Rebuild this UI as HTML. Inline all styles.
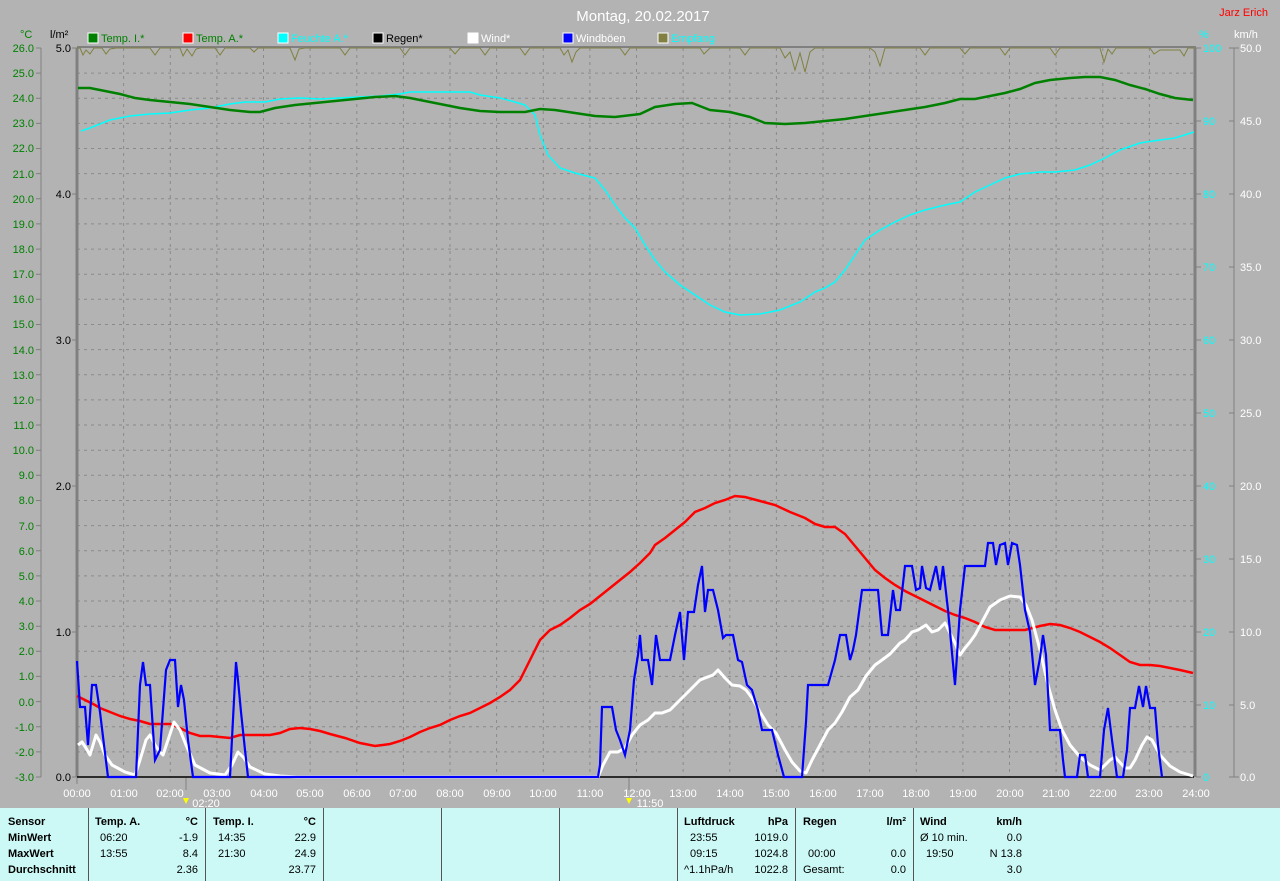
<!DOCTYPE html>
<html><head><meta charset="utf-8"><style>
html,body{margin:0;padding:0;background:#b3b3b3;}
svg{display:block;font-family:"Liberation Sans",sans-serif;}
.tb{position:absolute;left:0;top:808px;width:1280px;height:73px;background:#ccf9f6;font-family:"Liberation Sans",sans-serif;font-size:11px;color:#000;}
.col{position:absolute;top:0;height:73px;border-left:1px solid #555;}
.r{position:absolute;white-space:nowrap}
.b{font-weight:bold}
</style></head><body>
<div style="position:relative;width:1280px;height:881px;overflow:hidden">
<svg width="1280" height="808" viewBox="0 0 1280 808">
<rect width="1280" height="808" fill="#b3b3b3"/>
<text x="643" y="21" fill="#fff" font-size="15" text-anchor="middle">Montag, 20.02.2017</text>
<text x="1268" y="16" fill="#f00" font-size="11" text-anchor="end">Jarz Erich</text>
<g font-size="11">
<rect x="88" y="33" width="10" height="10" fill="#008000" stroke="#fff"/><text x="101" y="42" fill="#008000">Temp. I.*</text>
<rect x="183" y="33" width="10" height="10" fill="#f00" stroke="#fff"/><text x="196" y="42" fill="#008000">Temp. A.*</text>
<rect x="278" y="33" width="10" height="10" fill="#0ff" stroke="#fff"/><text x="291" y="42" fill="#0ff">Feuchte A.*</text>
<rect x="373" y="33" width="10" height="10" fill="#000" stroke="#fff"/><text x="386" y="42" fill="#000">Regen*</text>
<rect x="468" y="33" width="10" height="10" fill="#fff" stroke="#fff"/><text x="481" y="42" fill="#fff">Wind*</text>
<rect x="563" y="33" width="10" height="10" fill="#00f" stroke="#fff"/><text x="576" y="42" fill="#fff">Windböen</text>
<rect x="658" y="33" width="10" height="10" fill="#808040" stroke="#fff"/><text x="671" y="42" fill="#0ff">Empfang</text>
<text x="20" y="38" fill="#008000">°C</text>
<text x="50" y="38" fill="#000">l/m²</text>
<text x="1199" y="38" fill="#0ff">%</text>
<text x="1234" y="38" fill="#fff">km/h</text>
</g>
<!-- grid -->
<g stroke="#8a8a8a" stroke-dasharray="3,4" stroke-width="1">
<path d="M77 73.1H1194M77 98.2H1194M77 123.4H1194M77 148.5H1194M77 173.6H1194M77 198.8H1194M77 223.9H1194M77 249.1H1194M77 274.2H1194M77 299.3H1194M77 324.5H1194M77 349.6H1194M77 374.8H1194M77 399.9H1194M77 425H1194M77 450.2H1194M77 475.3H1194M77 500.5H1194M77 525.6H1194M77 550.7H1194M77 575.9H1194M77 601H1194M77 626.2H1194M77 651.3H1194M77 676.4H1194M77 701.6H1194M77 726.7H1194M77 751.9H1194"/>
<path d="M123.6 48V777M170.3 48V777M216.9 48V777M263.5 48V777M310.1 48V777M356.8 48V777M403.4 48V777M450 48V777M496.6 48V777M543.3 48V777M589.9 48V777M636.5 48V777M683.1 48V777M729.8 48V777M776.4 48V777M823 48V777M869.6 48V777M916.3 48V777M962.9 48V777M1009.5 48V777M1056.1 48V777M1102.8 48V777M1149.4 48V777"/>
</g>
<!-- axes -->
<g stroke="#808080" fill="none">
<path d="M41 48V777" stroke-width="1"/>
<path d="M36 48H41M36 73.1H41M36 98.2H41M36 123.4H41M36 148.5H41M36 173.6H41M36 198.8H41M36 223.9H41M36 249.1H41M36 274.2H41M36 299.3H41M36 324.5H41M36 349.6H41M36 374.8H41M36 399.9H41M36 425H41M36 450.2H41M36 475.3H41M36 500.5H41M36 525.6H41M36 550.7H41M36 575.9H41M36 601H41M36 626.2H41M36 651.3H41M36 676.4H41M36 701.6H41M36 726.7H41M36 751.9H41M36 777H41"/>
<path d="M77 48V777" stroke-width="3"/>
<path d="M72 48H77M72 194H77M72 340H77M72 486H77M72 632H77M72 777H77"/>
<path d="M77 47H1196" stroke-width="2"/>
<path d="M1195 48V777" stroke-width="3"/>
<path d="M1196 48H1201M1196 121H1201M1196 194H1201M1196 267H1201M1196 340H1201M1196 413H1201M1196 486H1201M1196 559H1201M1196 632H1201M1196 705H1201M1196 777H1201"/>
<path d="M1234 48V777"/>
<path d="M1229 48H1239M1229 121H1234M1229 194H1234M1229 267H1234M1229 340H1234M1229 413H1234M1229 486H1234M1229 559H1234M1229 632H1234M1229 705H1234M1229 777H1239"/>
<path d="M77 778V784M186 778V790M629 778V790"/>
</g>
<path d="M77 777H1194" stroke="#000" stroke-width="1.5"/>
<g font-size="11" fill="#008000" text-anchor="end">
<text x="34" y="52">26.0</text><text x="34" y="77">25.0</text><text x="34" y="102">24.0</text><text x="34" y="127">23.0</text><text x="34" y="152">22.0</text><text x="34" y="178">21.0</text><text x="34" y="203">20.0</text><text x="34" y="228">19.0</text><text x="34" y="253">18.0</text><text x="34" y="278">17.0</text><text x="34" y="303">16.0</text><text x="34" y="328">15.0</text><text x="34" y="354">14.0</text><text x="34" y="379">13.0</text><text x="34" y="404">12.0</text><text x="34" y="429">11.0</text><text x="34" y="454">10.0</text><text x="34" y="479">9.0</text><text x="34" y="504">8.0</text><text x="34" y="530">7.0</text><text x="34" y="555">6.0</text><text x="34" y="580">5.0</text><text x="34" y="605">4.0</text><text x="34" y="630">3.0</text><text x="34" y="655">2.0</text><text x="34" y="680">1.0</text><text x="34" y="706">0.0</text><text x="34" y="731">-1.0</text><text x="34" y="756">-2.0</text><text x="34" y="781">-3.0</text>
</g>
<g font-size="11" fill="#000" text-anchor="end">
<text x="71" y="52">5.0</text><text x="71" y="198">4.0</text><text x="71" y="344">3.0</text><text x="71" y="490">2.0</text><text x="71" y="636">1.0</text><text x="71" y="781">0.0</text>
</g>
<g font-size="11" fill="#0ff">
<text x="1203" y="52">100</text><text x="1203" y="125">90</text><text x="1203" y="198">80</text><text x="1203" y="271">70</text><text x="1203" y="344">60</text><text x="1203" y="417">50</text><text x="1203" y="490">40</text><text x="1203" y="563">30</text><text x="1203" y="636">20</text><text x="1203" y="709">10</text><text x="1203" y="781">0</text>
</g>
<g font-size="11" fill="#fff">
<text x="1240" y="52">50.0</text><text x="1240" y="125">45.0</text><text x="1240" y="198">40.0</text><text x="1240" y="271">35.0</text><text x="1240" y="344">30.0</text><text x="1240" y="417">25.0</text><text x="1240" y="490">20.0</text><text x="1240" y="563">15.0</text><text x="1240" y="636">10.0</text><text x="1240" y="709">5.0</text><text x="1240" y="781">0.0</text>
</g>
<g font-size="11" fill="#fff" text-anchor="middle">
<text x="77" y="797">00:00</text><text x="124" y="797">01:00</text><text x="170" y="797">02:00</text><text x="217" y="797">03:00</text><text x="264" y="797">04:00</text><text x="310" y="797">05:00</text><text x="357" y="797">06:00</text><text x="403" y="797">07:00</text><text x="450" y="797">08:00</text><text x="497" y="797">09:00</text><text x="543" y="797">10:00</text><text x="590" y="797">11:00</text><text x="637" y="797">12:00</text><text x="683" y="797">13:00</text><text x="730" y="797">14:00</text><text x="776" y="797">15:00</text><text x="823" y="797">16:00</text><text x="870" y="797">17:00</text><text x="916" y="797">18:00</text><text x="963" y="797">19:00</text><text x="1010" y="797">20:00</text><text x="1056" y="797">21:00</text><text x="1103" y="797">22:00</text><text x="1149" y="797">23:00</text><text x="1196" y="797">24:00</text>
<text x="206" y="807">02:20</text><text x="650" y="807">11:50</text>
</g>
<path d="M183 798l3 6 3-6z" fill="#ff0"/><path d="M626 798l3 6 3-6z" fill="#ff0"/>
<!-- olive -->
<polyline fill="none" stroke="#808040" stroke-width="1" points="77,48 80,48 83,55 86,50 90,54 94,48 102,48 106,54 110,49 116,48 150,48 155,55 160,48 180,48 183,56 187,49 192,56 196,49 200,48 215,48 220,55 225,48 250,48 254,52 258,48 290,48 295,60 299,49 305,48 340,48 345,55 350,48 400,48 405,55 410,48 450,48 455,54 460,48 480,48 485,55 490,48 520,48 525,55 530,48 560,48 564,55 568,50 572,62 576,52 580,48 620,48 625,55 630,48 700,48 704,54 710,48 740,48 745,55 750,48 780,48 785,58 790,52 795,70 800,53 805,72 810,52 815,48 870,48 875,52 880,66 885,48 920,48 925,55 930,48 960,48 965,54 970,48 1000,48 1005,55 1010,48 1050,48 1055,55 1060,48 1100,48 1104,62 1108,49 1112,54 1116,48 1150,48 1154,54 1160,50 1180,50 1184,56 1188,48 1194,48"/>
<!-- cyan -->
<polyline fill="none" stroke="#0ff" stroke-width="1.5" points="81,131 90,128 110,120 130,116 150,114 170,113 190,110 210,108 230,104 245,102 265,102 280,99 300,98 320,99 340,98 360,97 380,96 400,94 410,92 430,92 470,92 480,95 500,98 515,102 525,105 535,115 540,135 548,155 560,168 575,173 595,178 605,190 615,205 625,218 635,228 645,245 655,260 665,272 680,285 695,295 710,305 725,312 740,315 760,314 780,310 800,302 815,292 825,288 835,282 845,270 855,255 865,240 880,230 895,222 910,215 925,210 945,205 960,202 975,192 990,185 1005,178 1020,174 1040,172 1055,172 1075,170 1090,165 1105,158 1120,150 1140,143 1160,140 1175,138 1194,132"/>
<!-- green -->
<polyline fill="none" stroke="#008000" stroke-width="2.5" points="78,88 90,88 105,91 120,94 135,98 150,100 170,102 190,104 210,107 230,110 250,112 260,112 275,108 295,105 315,103 335,101 355,99 375,97 395,96 410,98 425,101 440,104 460,108 480,111 500,112 525,112 540,109 555,110 575,113 595,116 615,117 640,114 655,107 675,104 692,103 710,110 730,112 750,117 765,123 785,124 805,123 825,121 845,119 865,116 885,113 905,110 925,107 945,103 960,99 975,99 990,96 1005,93 1020,89 1035,83 1050,80 1070,78 1085,77 1100,77 1115,80 1130,85 1145,89 1160,94 1175,98 1193,100"/>
<!-- red -->
<polyline fill="none" stroke="#f00" stroke-width="2.5" points="77,696 85,700 95,705 100,708 110,712 120,716 130,719 140,721 150,724 160,724 170,724 180,728 190,733 200,736 210,736 220,737 230,738 240,735 250,735 260,735 270,735 280,733 290,729 300,728 310,729 320,731 330,734 345,738 360,743 375,746 390,744 400,741 410,737 420,732 430,728 440,725 450,720 460,716 470,713 480,708 490,703 500,697 510,690 520,680 525,670 530,660 535,650 540,640 550,630 560,625 570,618 580,610 590,604 600,596 610,588 620,580 630,572 640,563 650,553 655,545 665,538 675,530 685,522 695,512 705,508 715,503 725,500 735,496 745,497 760,501 775,505 790,512 805,518 815,524 825,527 835,527 845,534 855,546 865,558 875,570 885,578 895,585 905,591 915,596 925,601 935,606 945,611 955,615 965,618 975,622 985,627 995,630 1010,630 1025,630 1040,626 1050,624 1060,625 1070,628 1080,632 1090,637 1100,642 1110,648 1120,655 1130,662 1140,665 1150,665 1160,666 1170,668 1180,670 1193,673"/>
<!-- white -->
<polyline fill="none" stroke="#fff" stroke-width="3" stroke-linejoin="round" points="78,745 82,742 86,748 90,755 96,735 100,742 105,755 112,765 125,772 135,775 140,760 146,740 150,735 155,745 160,752 163,755 168,740 174,722 180,730 186,745 195,765 210,773 225,775 232,765 238,752 244,758 250,767 265,774 280,776 297,777 598,777 603,765 610,752 618,752 625,748 632,735 640,725 648,720 655,713 662,713 670,710 680,700 690,690 700,680 705,678 713,675 718,670 725,678 732,685 740,686 746,690 752,698 760,712 768,725 776,733 785,750 792,762 800,771 806,773 812,760 820,745 828,730 835,723 842,712 850,697 858,690 866,676 875,665 882,660 890,654 900,643 905,640 912,632 918,630 926,625 932,632 938,630 945,623 950,633 955,643 960,655 965,648 970,642 975,635 982,622 990,607 1000,600 1010,596 1020,597 1026,605 1032,620 1040,650 1048,685 1055,710 1062,730 1070,745 1080,757 1090,765 1100,770 1110,760 1115,757 1125,768 1130,768 1135,760 1142,745 1147,737 1152,740 1160,755 1170,766 1180,772 1193,776"/>
<!-- blue -->
<polyline fill="none" stroke="#00f" stroke-width="2.2" points="77,661 80,707 85,707 88,745 92,685 96,685 100,712 104,745 108,777 136,777 140,685 143,662 146,685 150,685 155,760 160,750 166,670 170,660 175,660 178,707 181,685 184,700 188,740 193,777 230,777 234,700 236,662 238,680 241,712 245,750 248,777 598,777 600,765 602,707 612,707 616,730 620,740 625,755 630,730 634,680 638,655 640,635 642,660 645,660 648,660 652,685 656,635 660,660 670,660 675,635 680,612 684,660 688,612 694,612 698,585 702,566 705,612 708,590 713,590 718,610 723,638 726,635 733,635 738,660 742,662 747,685 752,690 758,710 762,730 772,730 778,755 784,777 802,777 806,722 808,685 818,685 828,685 835,660 840,635 846,635 850,660 853,650 856,635 862,590 866,590 878,590 882,635 888,635 893,590 896,610 900,610 905,566 912,566 916,590 920,588 922,566 926,588 930,590 936,566 940,590 943,566 948,610 955,685 960,610 965,566 985,566 988,543 993,543 996,565 1000,545 1005,543 1008,565 1012,543 1017,545 1020,565 1025,610 1030,632 1035,685 1040,658 1043,635 1046,655 1050,730 1060,730 1063,760 1065,777 1077,777 1080,755 1085,755 1088,777 1100,777 1104,730 1108,708 1112,740 1117,777 1123,777 1127,750 1130,708 1135,708 1139,686 1143,707 1146,686 1150,708 1155,708 1158,745 1162,777"/>
</svg>
<div class="tb">
<div class="col" style="left:88px"></div><div class="col" style="left:205px"></div><div class="col" style="left:323px"></div><div class="col" style="left:441px"></div><div class="col" style="left:559px"></div><div class="col" style="left:677px"></div><div class="col" style="left:795px"></div><div class="col" style="left:913px"></div>
<div class="r b" style="left:8px;top:8px">Sensor</div>
<div class="r b" style="left:8px;top:24px">MinWert</div>
<div class="r b" style="left:8px;top:40px">MaxWert</div>
<div class="r b" style="left:8px;top:56px">Durchschnitt</div>
<div class="r b" style="left:95px;top:8px">Temp. A.</div><div class="r b" style="right:1082px;top:8px">°C</div>
<div class="r" style="left:100px;top:24px">06:20</div><div class="r" style="right:1082px;top:24px">-1.9</div>
<div class="r" style="left:100px;top:40px">13:55</div><div class="r" style="right:1082px;top:40px">8.4</div>
<div class="r" style="right:1082px;top:56px">2.36</div>
<div class="r b" style="left:213px;top:8px">Temp. I.</div><div class="r b" style="right:964px;top:8px">°C</div>
<div class="r" style="left:218px;top:24px">14:35</div><div class="r" style="right:964px;top:24px">22.9</div>
<div class="r" style="left:218px;top:40px">21:30</div><div class="r" style="right:964px;top:40px">24.9</div>
<div class="r" style="right:964px;top:56px">23.77</div>
<div class="r b" style="left:684px;top:8px">Luftdruck</div><div class="r b" style="right:492px;top:8px">hPa</div>
<div class="r" style="left:690px;top:24px">23:55</div><div class="r" style="right:492px;top:24px">1019.0</div>
<div class="r" style="left:690px;top:40px">09:15</div><div class="r" style="right:492px;top:40px">1024.8</div>
<div class="r" style="left:684px;top:56px">^1.1hPa/h</div><div class="r" style="right:492px;top:56px">1022.8</div>
<div class="r b" style="left:803px;top:8px">Regen</div><div class="r b" style="right:374px;top:8px">l/m²</div>
<div class="r" style="left:808px;top:40px">00:00</div><div class="r" style="right:374px;top:40px">0.0</div>
<div class="r" style="left:803px;top:56px">Gesamt:</div><div class="r" style="right:374px;top:56px">0.0</div>
<div class="r b" style="left:920px;top:8px">Wind</div><div class="r b" style="right:258px;top:8px">km/h</div>
<div class="r" style="left:920px;top:24px">Ø 10 min.</div><div class="r" style="right:258px;top:24px">0.0</div>
<div class="r" style="left:926px;top:40px">19:50</div><div class="r" style="right:258px;top:40px">N 13.8</div>
<div class="r" style="right:258px;top:56px">3.0</div>
</div>
</div>
</body></html>
